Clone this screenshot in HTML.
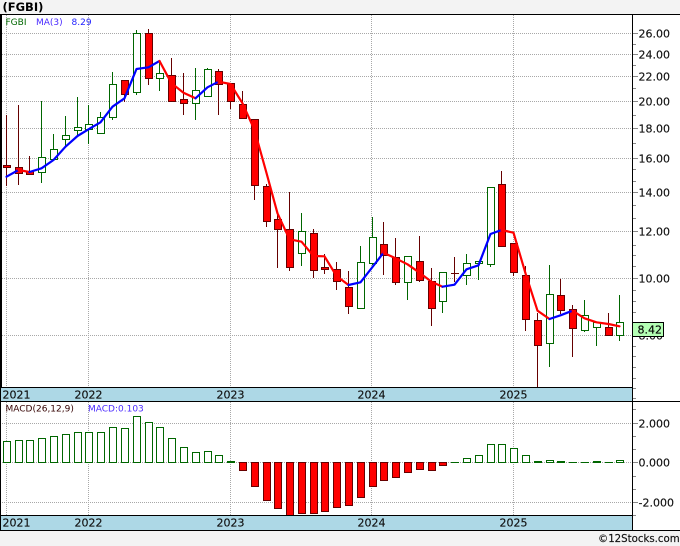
<!DOCTYPE html>
<html><head><meta charset="utf-8"><style>
html,body{margin:0;padding:0;background:#f3f3f3}
svg{display:block}
text{font-family:"DejaVu Sans","Liberation Sans",sans-serif;font-size:11px;fill:#111;stroke:#111;stroke-width:.15px}
.gr{stroke:#a8a8a8;stroke-width:1;stroke-dasharray:1 1;fill:none;shape-rendering:crispEdges}
.tk{stroke:#888;stroke-width:1;fill:none;shape-rendering:crispEdges}
.gw{stroke:#060;stroke-width:1;fill:none;shape-rendering:crispEdges}
.rw{stroke:#600;stroke-width:1;fill:none;shape-rendering:crispEdges}
.g rect{fill:#fff;stroke:#060;stroke-width:1;shape-rendering:crispEdges}
.r rect{fill:#f00;stroke:#600;stroke-width:1;shape-rendering:crispEdges}
.mg rect{fill:#fff;stroke:#060;stroke-width:1;shape-rendering:crispEdges}
.mr rect{fill:#f00;stroke:#600;stroke-width:1;shape-rendering:crispEdges}
.b{stroke:#00f;stroke-width:2.2;fill:none;stroke-linejoin:round;stroke-linecap:round}
.d{stroke:#f00;stroke-width:2.2;fill:none;stroke-linejoin:round;stroke-linecap:round}
</style></head><body>
<svg xmlns="http://www.w3.org/2000/svg" width="680" height="546" viewBox="0 0 680 546">
<rect width="680" height="546" fill="#f3f3f3"/>
<rect x="0" y="14" width="680" height="516" fill="#fff"/>
<text x="2.5" y="11" style="font-size:11.5px;font-weight:bold;fill:#000;stroke:none">(FGBI)</text>

<path class="gr" d="M6.5 15V388M88.5 15V388M230.5 15V388M371.5 15V388M513.5 15V388M6.5 402V515M88.5 402V515M230.5 402V515M371.5 402V515M513.5 402V515"/>
<path class="gr" d="M0 33.5H632M0 54.5H632M0 76.5H632M0 101.5H632M0 128.5H632M0 158.5H632M0 192.5H632M0 231.5H632M0 278.5H632M0 335.5H632M0 423.5H632M0 462.5H632M0 502.5H632"/>

<path class="rw" d="M6.5 115V186M18.5 105V185M29.5 156V173M124.5 80V102M148.5 29V85M171.5 58V101M183.5 73V115M218.5 69V115M230.5 83V109M242.5 91V118M254.5 119V200M266.5 184V227M277.5 213V268M289.5 192V271M313.5 229V278M324.5 254V274M336.5 262V290M348.5 271V314M383.5 222V275M395.5 238V285M419.5 236V282M431.5 268V326M454.5 257V282M501.5 171V247M513.5 243V276M525.5 266V331M537.5 313V388M560.5 279V314M572.5 305V357M608.5 313V335"/>
<path class="gw" d="M41.5 101V183M53.5 134V160M65.5 116V147M77.5 97V137M88.5 105V144M100.5 112V133M112.5 72V120M136.5 30V95M159.5 61V91M195.5 68V120M207.5 68V96M301.5 213V266M360.5 246V308M372.5 217V265M407.5 256V300M442.5 272V313M466.5 254V285M478.5 262V280M490.5 187V267M549.5 265V367M584.5 300V332M596.5 322V346M619.5 295V341"/>

<g class="r">
<rect x="3.5" y="165.5" width="7" height="2"/>
<rect x="15.5" y="167.5" width="7" height="6"/>
<rect x="26.5" y="171.5" width="7" height="3"/>
<rect x="121.5" y="80.5" width="7" height="14"/>
<rect x="145.5" y="33.5" width="7" height="45"/>
<rect x="168.5" y="75.5" width="7" height="26"/>
<rect x="180.5" y="99.5" width="7" height="4"/>
<rect x="215.5" y="71.5" width="7" height="13"/>
<rect x="227.5" y="83.5" width="7" height="18"/>
<rect x="239.5" y="104.5" width="7" height="14"/>
<rect x="251.5" y="119.5" width="7" height="66"/>
<rect x="263.5" y="186.5" width="7" height="35"/>
<rect x="274.5" y="219.5" width="7" height="10"/>
<rect x="286.5" y="229.5" width="7" height="38"/>
<rect x="310.5" y="233.5" width="7" height="37"/>
<rect x="321.5" y="267.5" width="7" height="2"/>
<rect x="333.5" y="269.5" width="7" height="12"/>
<rect x="345.5" y="287.5" width="7" height="19"/>
<rect x="380.5" y="244.5" width="7" height="11"/>
<rect x="392.5" y="257.5" width="7" height="25"/>
<rect x="416.5" y="261.5" width="7" height="19"/>
<rect x="428.5" y="281.5" width="7" height="27"/>
<rect x="498.5" y="184.5" width="7" height="62"/>
<rect x="510.5" y="243.5" width="7" height="29"/>
<rect x="522.5" y="275.5" width="7" height="44"/>
<rect x="534.5" y="320.5" width="7" height="25"/>
<rect x="557.5" y="295.5" width="7" height="15"/>
<rect x="569.5" y="309.5" width="7" height="19"/>
<rect x="605.5" y="327.5" width="7" height="8"/>
</g>
<g class="g">
<rect x="38.5" y="157.5" width="7" height="15"/>
<rect x="50.5" y="149.5" width="7" height="10"/>
<rect x="62.5" y="135.5" width="7" height="4"/>
<rect x="74.5" y="127.5" width="7" height="3"/>
<rect x="85.5" y="124.5" width="7" height="5"/>
<rect x="97.5" y="117.5" width="7" height="16"/>
<rect x="109.5" y="84.5" width="7" height="33"/>
<rect x="133.5" y="33.5" width="7" height="59"/>
<rect x="156.5" y="73.5" width="7" height="5"/>
<rect x="192.5" y="90.5" width="7" height="13"/>
<rect x="204.5" y="69.5" width="7" height="27"/>
<rect x="298.5" y="231.5" width="7" height="22"/>
<rect x="357.5" y="262.5" width="7" height="46"/>
<rect x="369.5" y="237.5" width="7" height="26"/>
<rect x="404.5" y="256.5" width="7" height="26"/>
<rect x="439.5" y="272.5" width="7" height="29"/>
<rect x="463.5" y="263.5" width="7" height="12"/>
<rect x="475.5" y="261.5" width="7" height="2"/>
<rect x="487.5" y="187.5" width="7" height="77"/>
<rect x="546.5" y="294.5" width="7" height="49"/>
<rect x="581.5" y="315.5" width="7" height="15"/>
<rect x="593.5" y="322.5" width="7" height="5"/>
<rect x="616.5" y="322.5" width="7" height="13"/>
</g>

<path class="b" d="M6.5 176.7L18.5 170"/>
<path class="d" d="M18.5 170L29.5 172"/>
<path class="b" d="M29.5 172L41.5 168.3L53.5 160L65.5 146.7L77.5 136L88.5 129.3L100.5 122.3L112.5 106.7L124.5 98.3L136.5 69L148.5 67.3L159.5 61"/>
<path class="d" d="M159.5 61L171.5 83.3L183.5 92.7L195.5 98.3"/>
<path class="b" d="M195.5 98.3L207.5 87.3L218.5 81.7"/>
<path class="d" d="M218.5 81.7L230.5 84L242.5 103.3L254.5 130L266.5 173L277.5 213.3L289.5 239.3L301.5 241.7L313.5 256L324.5 256.3L336.5 276L348.5 285"/>
<path class="b" d="M348.5 285L360.5 282.3L372.5 267L383.5 252.7"/>
<path class="d" d="M383.5 252.7L395.5 258.3L407.5 264.3L419.5 272.7L431.5 281.7L442.5 286.7"/>
<path class="b" d="M442.5 286.7L454.5 284.7L466.5 269.3L478.5 265.3L490.5 234L501.5 230"/>
<path class="d" d="M501.5 230L513.5 232.7L525.5 273.3L537.5 310.7L549.5 319"/>
<path class="b" d="M549.5 319L560.5 315.3L572.5 310.7"/>
<path class="d" d="M572.5 310.7L584.5 318.3L596.5 322.3L608.5 324L619.5 326.3"/>

<path class="rw" d="M451 273.5H459"/>

<g class="mg">
<rect x="3.5" y="441.5" width="7" height="21"/>
<rect x="15.5" y="440.5" width="7" height="22"/>
<rect x="26.5" y="440.5" width="7" height="22"/>
<rect x="38.5" y="438.5" width="7" height="24"/>
<rect x="50.5" y="436.5" width="7" height="26"/>
<rect x="62.5" y="434.5" width="7" height="28"/>
<rect x="74.5" y="432.5" width="7" height="30"/>
<rect x="85.5" y="432.5" width="7" height="30"/>
<rect x="97.5" y="432.5" width="7" height="30"/>
<rect x="109.5" y="427.5" width="7" height="35"/>
<rect x="121.5" y="428.5" width="7" height="34"/>
<rect x="133.5" y="416.5" width="7" height="46"/>
<rect x="145.5" y="422.5" width="7" height="40"/>
<rect x="156.5" y="427.5" width="7" height="35"/>
<rect x="168.5" y="438.5" width="7" height="24"/>
<rect x="180.5" y="447.5" width="7" height="15"/>
<rect x="192.5" y="452.5" width="7" height="10"/>
<rect x="204.5" y="451.5" width="7" height="11"/>
<rect x="215.5" y="455.5" width="7" height="7"/>
<rect x="227.5" y="461.5" width="7" height="1"/>
<rect x="463.5" y="458.5" width="7" height="4"/>
<rect x="475.5" y="455.5" width="7" height="7"/>
<rect x="487.5" y="444.5" width="7" height="18"/>
<rect x="498.5" y="444.5" width="7" height="18"/>
<rect x="510.5" y="448.5" width="7" height="14"/>
<rect x="522.5" y="455.5" width="7" height="7"/>
<rect x="534.5" y="461.5" width="7" height="1"/>
<rect x="546.5" y="460.5" width="7" height="2"/>
<rect x="557.5" y="461.5" width="7" height="1"/>
<rect x="593.5" y="461.5" width="7" height="1"/>
<rect x="616.5" y="460.5" width="7" height="2"/>
</g>
<path class="gw" d="M451 462.5H459M569 462.5H577M581 462.5H589M605 462.5H613"/>
<g class="mr">
<rect x="239.5" y="462.5" width="7" height="8"/>
<rect x="251.5" y="462.5" width="7" height="24"/>
<rect x="263.5" y="462.5" width="7" height="38"/>
<rect x="274.5" y="462.5" width="7" height="46"/>
<rect x="286.5" y="462.5" width="7" height="54"/>
<rect x="298.5" y="462.5" width="7" height="51"/>
<rect x="310.5" y="462.5" width="7" height="51"/>
<rect x="321.5" y="462.5" width="7" height="49"/>
<rect x="333.5" y="462.5" width="7" height="45"/>
<rect x="345.5" y="462.5" width="7" height="43"/>
<rect x="357.5" y="462.5" width="7" height="35"/>
<rect x="369.5" y="462.5" width="7" height="24"/>
<rect x="380.5" y="462.5" width="7" height="18"/>
<rect x="392.5" y="462.5" width="7" height="15"/>
<rect x="404.5" y="462.5" width="7" height="10"/>
<rect x="416.5" y="462.5" width="7" height="7"/>
<rect x="428.5" y="462.5" width="7" height="8"/>
<rect x="439.5" y="462.5" width="7" height="3"/>
</g>

<rect x="1" y="388" width="631" height="14" fill="#add8e6"/>
<rect x="1" y="516" width="631" height="14" fill="#add8e6"/>
<path d="M0 14.5H680M0 387.5H632M0 401.5H680M0 515.5H632M0 530.5H680M632.5 14V531" stroke="#000" stroke-width="1" fill="none" shape-rendering="crispEdges"/>
<rect x="0" y="14" width="2" height="374" fill="#000"/>
<rect x="0" y="388" width="1" height="143" fill="#000"/>

<path class="tk" d="M633 33.5H638M633 44.5H636M633 54.5H638M633 65.5H636M633 76.5H638M633 88.5H636M633 101.5H638M633 115.5H636M633 128.5H638M633 143.5H636M633 158.5H638M633 169.5H636M633 181.5H636M633 192.5H638M633 205.5H636M633 218.5H636M633 231.5H638M633 245.5H636M633 255.5H636M633 266.5H636M633 278.5H638M633 290.5H636M633 301.5H636M633 312.5H636M633 346.5H636M633 356.5H636M633 367.5H636M633 378.5H636M633 388.5H636M633 398.5H636M633 409.5H636M633 423.5H638M633 436.5H636M633 449.5H636M633 462.5H638M633 476.5H636M633 489.5H636M633 502.5H638M633 515.5H636"/>

<text x="638.5" y="37.5">26.00</text>
<text x="638.5" y="58.5">24.00</text>
<text x="638.5" y="80.5">22.00</text>
<text x="638.5" y="105.5">20.00</text>
<text x="638.5" y="132.5">18.00</text>
<text x="638.5" y="162.5">16.00</text>
<text x="638.5" y="196.5">14.00</text>
<text x="638.5" y="235.5">12.00</text>
<text x="638.5" y="282.5">10.00</text>
<text x="638.5" y="339.5">8.00</text>
<rect x="632.5" y="322.5" width="31" height="14" fill="#b4ffb4" stroke="#000" stroke-width="1" shape-rendering="crispEdges"/>
<text x="637.5" y="333.5" style="fill:#000">8.42</text>

<text x="638.5" y="427.5">2.000</text>
<text x="638.5" y="466.5">0.000</text>
<text x="638.5" y="506.5">-2.000</text>

<text x="2.5" y="398.5">2021</text><text x="74.5" y="398.5">2022</text><text x="216.5" y="398.5">2023</text><text x="357.5" y="398.5">2024</text><text x="499.5" y="398.5">2025</text>
<text x="2.5" y="526.5">2021</text><text x="74.5" y="526.5">2022</text><text x="216.5" y="526.5">2023</text><text x="357.5" y="526.5">2024</text><text x="499.5" y="526.5">2025</text>

<text x="5.5" y="25" style="font-size:9px;fill:#060;stroke:none">FGBI</text>
<text x="36" y="25" style="font-size:9px;fill:#4b2bff;stroke:none">MA(3)</text>
<text x="71.5" y="25" style="font-size:9px;fill:#22f;stroke:none">8.29</text>
<text x="5.5" y="411.5" style="font-size:9px;fill:#300;stroke:none">MACD(26,12,9)</text>
<text x="88" y="411.5" style="font-size:9px;fill:#4b2bff;stroke:none">MACD:0.103</text>
<text x="598" y="542" style="font-size:10.2px">©12Stocks.com</text>
</svg>
</body></html>
